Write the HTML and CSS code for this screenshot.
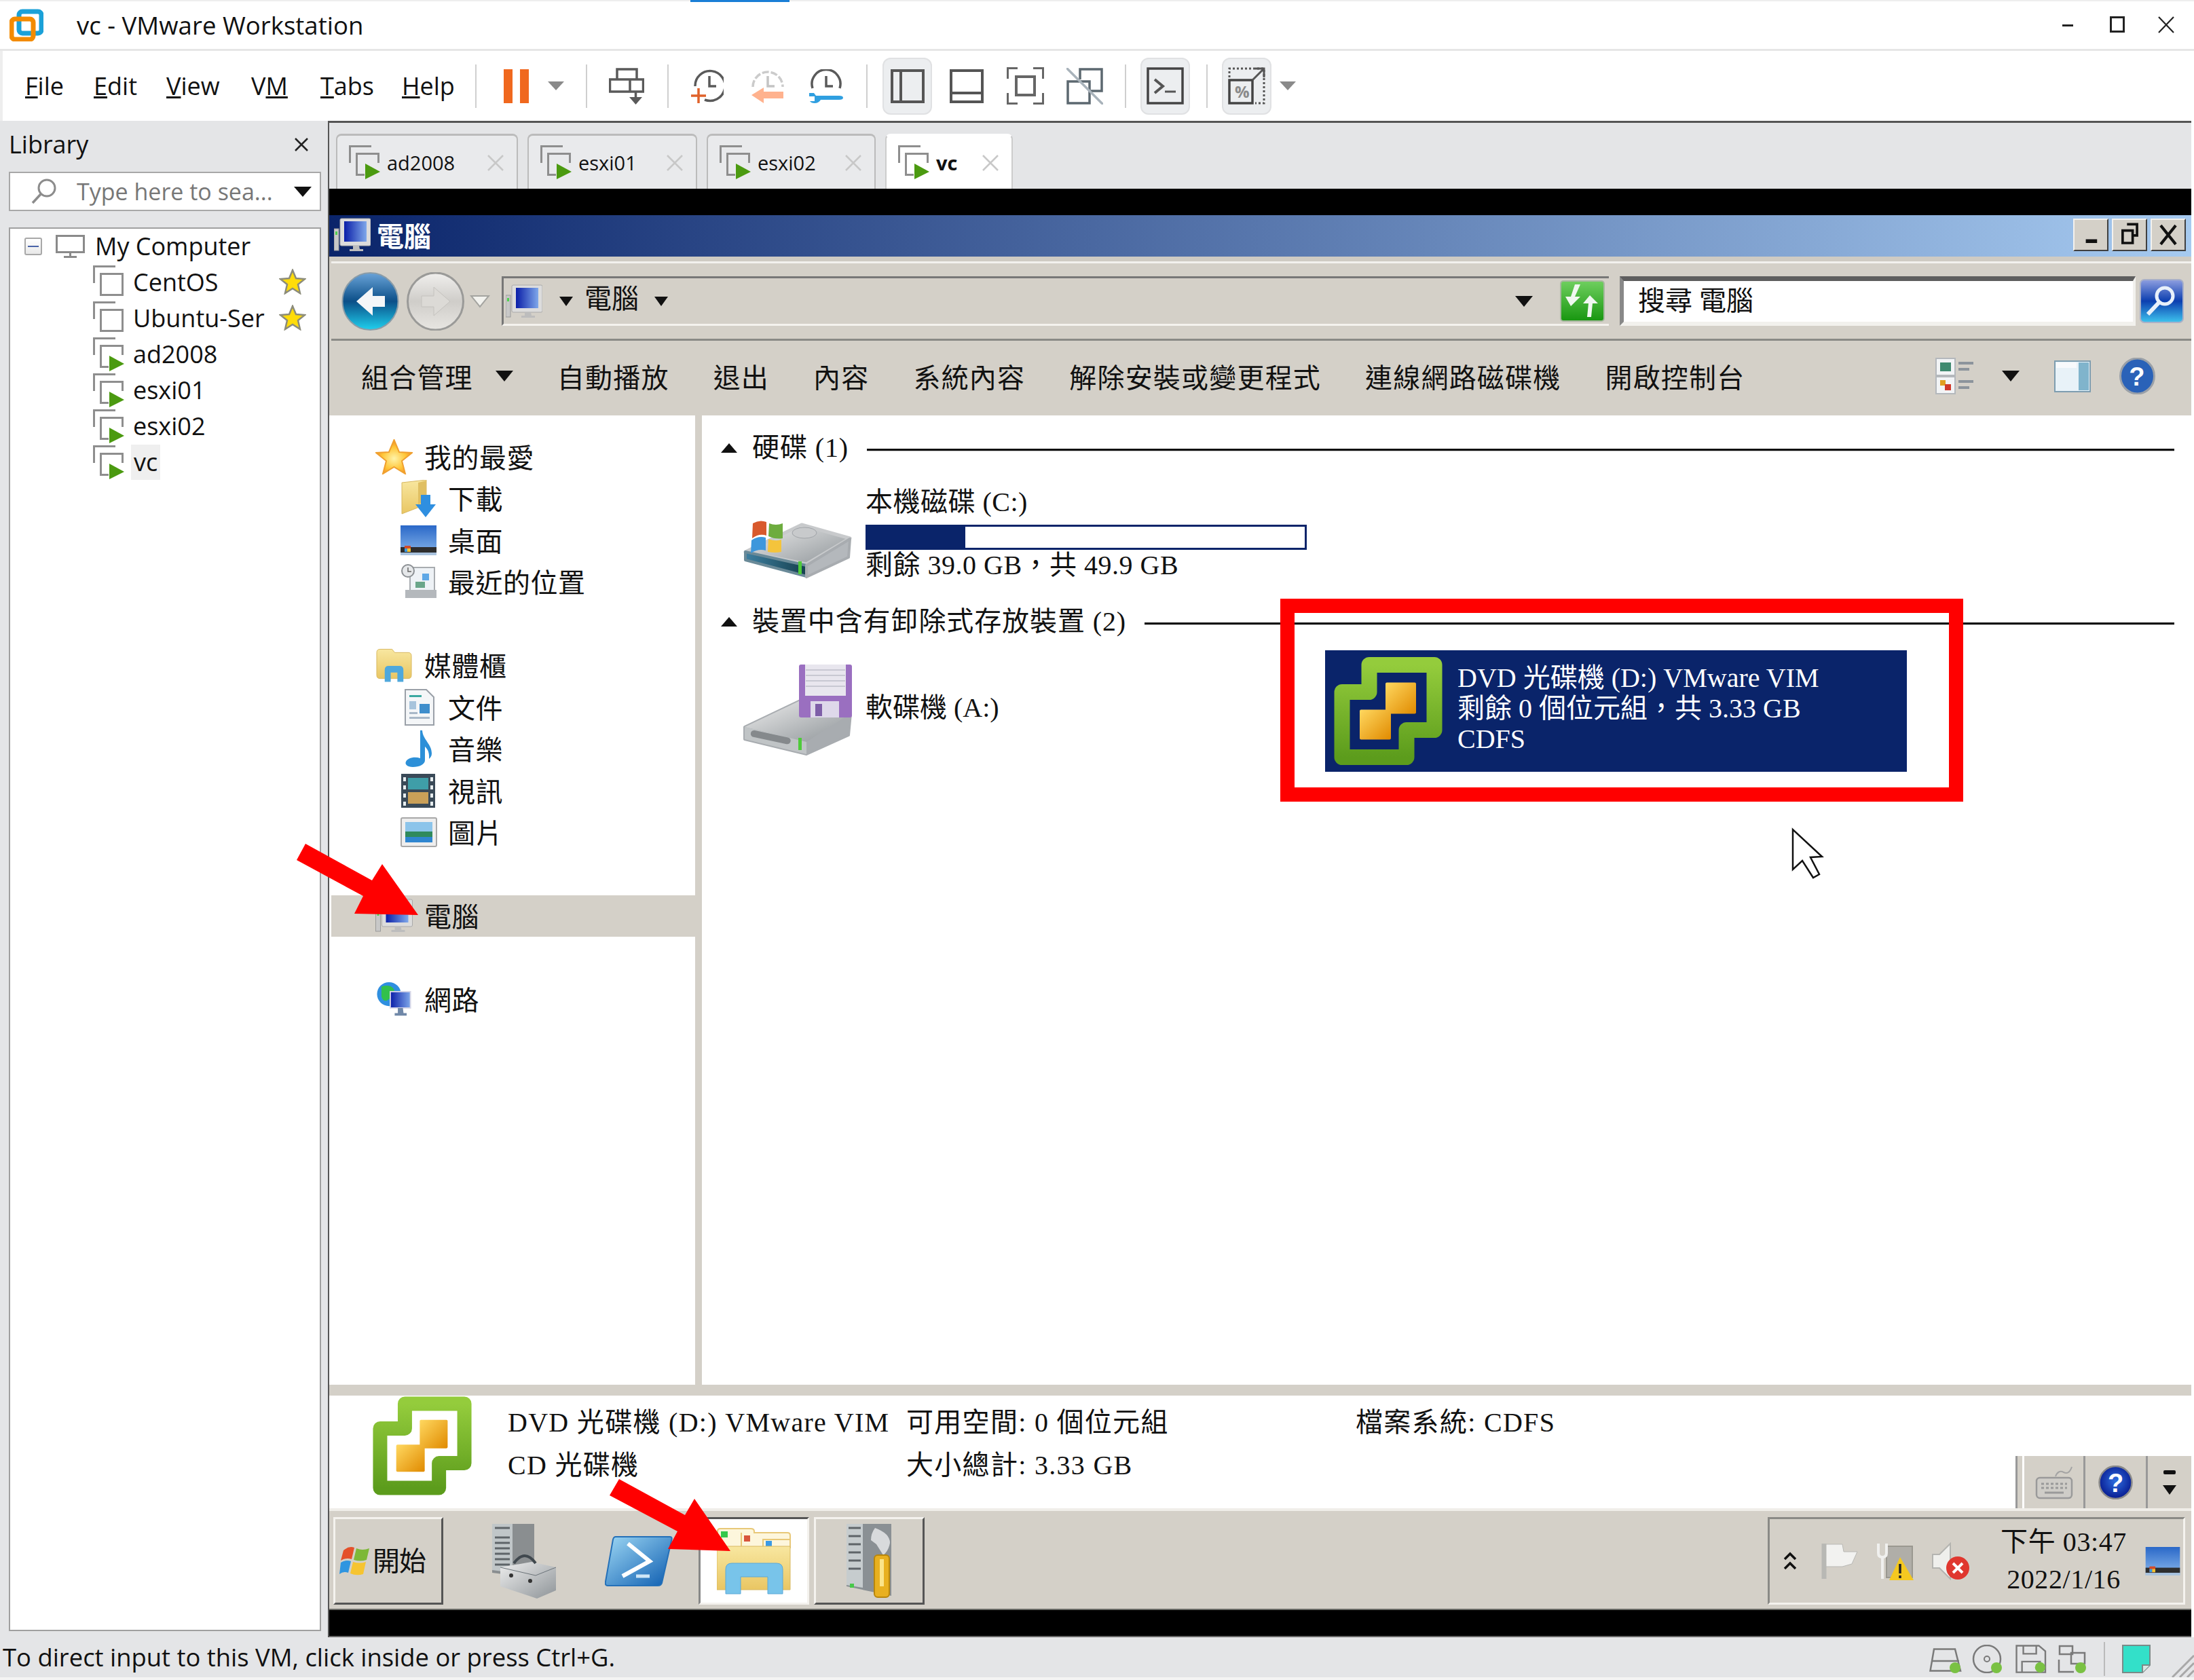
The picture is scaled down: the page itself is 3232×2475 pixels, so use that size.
FILE: index.html
```html
<!DOCTYPE html>
<html lang="zh-Hant">
<head>
<meta charset="utf-8">
<title>vc - VMware Workstation</title>
<link rel="stylesheet" href="styles.css">
</head>
<body>
<svg class="defs" aria-hidden="true">
  <defs>
    <linearGradient id="gGreen" x1="0" y1="0" x2="0" y2="1"><stop offset="0" stop-color="#94cc3c"/><stop offset="1" stop-color="#5c9c1c"/></linearGradient>
    <linearGradient id="gOrange" x1="0" y1="0" x2="1" y2="1"><stop offset="0" stop-color="#ffd860"/><stop offset="1" stop-color="#e08a00"/></linearGradient>
    <radialGradient id="gStar" cx=".5" cy=".55" r=".55"><stop offset="0" stop-color="#fff3a8"/><stop offset=".6" stop-color="#ffc638"/><stop offset="1" stop-color="#f08a20"/></radialGradient>
    <linearGradient id="gScreen" x1="0" y1="0" x2="1" y2="0"><stop offset="0" stop-color="#0a1ea8"/><stop offset="1" stop-color="#7fa8ea"/></linearGradient>
    <linearGradient id="gFolder" x1="0" y1="0" x2="0" y2="1"><stop offset="0" stop-color="#f8e7a0"/><stop offset="1" stop-color="#e9c663"/></linearGradient>
    <linearGradient id="gBack" x1="0" y1="0" x2="0" y2="1"><stop offset="0" stop-color="#6aa3d8"/><stop offset=".5" stop-color="#0b4f88"/><stop offset="1" stop-color="#1fd0ee"/></linearGradient>
    <linearGradient id="gFwd" x1="0" y1="0" x2="0" y2="1"><stop offset="0" stop-color="#f0efed"/><stop offset=".5" stop-color="#cfcdc9"/><stop offset="1" stop-color="#e8e6e2"/></linearGradient>
    <linearGradient id="gSteel" x1="0" y1="0" x2="1" y2="1"><stop offset="0" stop-color="#eeeeee"/><stop offset="1" stop-color="#8e9498"/></linearGradient>
    <linearGradient id="gTeal" x1="0" y1="0" x2="1" y2="0"><stop offset="0" stop-color="#3d7fa0"/><stop offset="1" stop-color="#16404e"/></linearGradient>
    <linearGradient id="gRefresh" x1="0" y1="0" x2="0" y2="1"><stop offset="0" stop-color="#6fcf5f"/><stop offset="1" stop-color="#17960f"/></linearGradient>
    <linearGradient id="gSearch" x1="0" y1="0" x2="0" y2="1"><stop offset="0" stop-color="#8f9fe0"/><stop offset=".5" stop-color="#0c3fb0"/><stop offset="1" stop-color="#3ec4ee"/></linearGradient>
    <radialGradient id="gHelp" cx=".5" cy=".45" r=".55"><stop offset="0" stop-color="#2f6fe0"/><stop offset="1" stop-color="#071a90"/></radialGradient>
    <linearGradient id="gPs" x1="0" y1="0" x2="1" y2="1"><stop offset="0" stop-color="#9ed8f4"/><stop offset="1" stop-color="#0c5cb0"/></linearGradient>
    <linearGradient id="gSky" x1="0" y1="0" x2="0" y2="1"><stop offset="0" stop-color="#2a68c8"/><stop offset="1" stop-color="#8ab8ec"/></linearGradient>

    <symbol id="vmlogo" viewBox="0 0 160 160">
      <path d="M52 12H148V108H107V148H12V52H52Z" fill="none" stroke="url(#gGreen)" stroke-width="23" stroke-linejoin="round"/>
      <rect x="76" y="38" width="45" height="46" fill="url(#gOrange)" rx="2"/>
      <rect x="38" y="78" width="46" height="44" fill="url(#gOrange)" rx="2"/>
    </symbol>
    <symbol id="vmoff" viewBox="0 0 46 50">
      <path d="M1.500 26V1.500H33" fill="none" stroke="#8e8e8e" stroke-width="3"/>
      <rect x="11.500" y="12.500" width="32" height="31" fill="none" stroke="#8e8e8e" stroke-width="3"/>
    </symbol>
    <symbol id="vmrun" viewBox="0 0 46 50">
      <path d="M1.500 26V1.500H33" fill="none" stroke="#8e8e8e" stroke-width="3"/>
      <path d="M23 43.500H11.500V12.500H43.500V26" fill="none" stroke="#8e8e8e" stroke-width="3"/>
      <path d="M24 27L46 39L24 50Z" fill="#4b9a10"/>
    </symbol>
    <symbol id="gstar" viewBox="0 0 40 38">
      <path d="M20 2L25 14L38 15L28 23L31 36L20 29L9 36L12 23L2 15L15 14Z" fill="#ffdc0a" stroke="#8c8c7a" stroke-width="2.500"/>
    </symbol>
    <symbol id="favstar" viewBox="0 0 55 52">
      <path d="M27.500 1L35 19L54 20L39 32L44 51L27.500 41L11 51L16 32L1 20L20 19Z" fill="url(#gStar)" stroke="#f0a030" stroke-width="2"/>
    </symbol>
    <symbol id="comp" viewBox="0 0 54 50">
      <rect x="0" y="16" width="7" height="32" fill="#c8c8c8" stroke="#9a9a9a"/>
      <rect x="2" y="20" width="3" height="5" fill="#4ed04e"/>
      <rect x="9" y="1" width="45" height="40" rx="2" fill="#dcdcdc" stroke="#aaa"/>
      <rect x="15" y="5" width="33" height="30" fill="url(#gScreen)"/>
      <path d="M28 41h9l1 5h5v3H23v-3h5z" fill="#bdbdbd"/>
    </symbol>
    <symbol id="dlfolder" viewBox="0 0 53 55">
      <path d="M2 4L38 0V36L2 50Z" fill="url(#gFolder)" stroke="#d8b860"/>
      <path d="M26 4L38 1V30L26 36Z" fill="#e0bf62"/>
      <path d="M30 22H44V36H52L37 55L22 36H30Z" fill="#2f8fe0"/>
    </symbol>
    <symbol id="desk" viewBox="0 0 53 44">
      <rect width="53" height="44" fill="url(#gSky)"/>
      <rect y="32" width="53" height="8" fill="#2e2e2e"/>
      <rect x="6" y="30" width="9" height="9" fill="#d24a2a"/><rect x="10" y="34" width="5" height="5" fill="#f2c230"/><rect x="6" y="34" width="4" height="5" fill="#3b9ae0"/>
      <rect y="40" width="53" height="4" fill="#a9c3de"/>
    </symbol>
    <symbol id="recent" viewBox="0 0 53 52">
      <rect x="14" y="5" width="36" height="34" fill="#eef2f6" stroke="#a8acb0" stroke-width="2"/>
      <circle cx="11" cy="10" r="9" fill="#e6e8ea" stroke="#8c9094" stroke-width="2"/><path d="M11 5v6h5" fill="none" stroke="#666" stroke-width="1.500"/>
      <rect x="32" y="14" width="10" height="10" fill="#5fa8e6"/><rect x="22" y="26" width="14" height="9" fill="#6aa68a"/>
      <path d="M7 38H53V50H7Z" fill="#b4b8bc"/>
    </symbol>
    <symbol id="libfolder" viewBox="0 0 56 50">
      <path d="M2 6q0-5 5-5h18l4 5h20q5 0 5 5v29q0 5-5 5H7q-5 0-5-5z" fill="url(#gFolder)" stroke="#d8b860"/>
      <path d="M14 50V32q0-6 6-6h16q6 0 6 6v18h-9V36H23v14z" fill="#4fa8dc"/>
    </symbol>
    <symbol id="docicon" viewBox="0 0 44 54">
      <path d="M1 1H32L43 12V53H1Z" fill="#f4f6f8" stroke="#9aa0a8" stroke-width="2"/>
      <rect x="7" y="9" width="18" height="3" fill="#3aa8a0"/><rect x="7" y="18" width="10" height="12" fill="#a8c4dc"/>
      <rect x="22" y="22" width="15" height="14" fill="#3e8ecc"/><rect x="7" y="34" width="12" height="3" fill="#a8b8c8"/><rect x="7" y="41" width="30" height="3" fill="#a8b8c8"/>
    </symbol>
    <symbol id="music" viewBox="0 0 44 54">
      <path d="M26 0C27 14 40 20 40 34C40 38 38 40 36 42C37 30 32 26 30 24V44C30 50 22 54 12 54C4 54 0 50 2 46C4 41 14 38 23 41V0Z" fill="#2d90d8"/>
    </symbol>
    <symbol id="video" viewBox="0 0 50 50">
      <rect width="50" height="50" fill="#3a4a58"/>
      <rect x="10" y="6" width="30" height="17" fill="#3f9ea8"/><rect x="10" y="27" width="30" height="17" fill="#caa058"/>
      <path d="M3 5h4v6H3zM3 17h4v6H3zM3 29h4v6H3zM3 41h4v6H3zM43 5h4v6h-4zM43 17h4v6h-4zM43 29h4v6h-4zM43 41h4v6h-4z" fill="#e8eef0"/>
    </symbol>
    <symbol id="picicon" viewBox="0 0 54 44">
      <rect x="1" y="1" width="52" height="42" rx="2" fill="#eeeeee" stroke="#a8a8a8" stroke-width="2"/>
      <rect x="7" y="7" width="40" height="14" fill="#8cc4ea"/><rect x="7" y="21" width="40" height="8" fill="#2f8a5c"/><rect x="7" y="29" width="40" height="8" fill="#2f86d0"/>
    </symbol>
    <symbol id="neticon" viewBox="0 0 56 56">
      <circle cx="20" cy="20" r="19" fill="#2f8fe0"/><path d="M8 8Q20 4 26 10T22 26T8 24Z" fill="#32c04c"/>
      <rect x="22" y="16" width="32" height="26" fill="url(#gScreen)" stroke="#d8d8e8" stroke-width="2"/>
      <path d="M34 42h8l1 8h5v4H29v-4h5z" fill="#7088a8"/>
    </symbol>
    <symbol id="hdd" viewBox="0 0 160 87">
      <path d="M3 48L86 8L157 28L93 66Z" fill="url(#gSteel)" stroke="#c8cacc" stroke-width="5" stroke-linejoin="round"/>
      <path d="M3 48L93 68V84L3 60Z" fill="url(#gTeal)" stroke="#6a8a98" stroke-width="4" stroke-linejoin="round"/>
      <path d="M93 68L157 29L155 56L93 85Z" fill="#b4b8bc" stroke="#a8acb0" stroke-width="4" stroke-linejoin="round"/>
      <ellipse cx="90" cy="20" rx="18" ry="8" fill="#c8cacc" stroke="#a0a4a8"/>
      <rect x="81" y="62" width="5" height="19" fill="#4ecb3a"/>
      <path d="M14 6Q24 0 34 4V24Q24 20 13 28Z" fill="#d8592c"/><path d="M38 6Q48 10 58 6V28Q48 30 37 25Z" fill="#6dac3e"/>
      <path d="M12 31Q22 24 33 27V46Q22 43 11 50Z" fill="#3d97dc"/><path d="M37 29Q47 33 56 30V48Q47 50 36 48Z" fill="#f4c43c"/>
    </symbol>
    <symbol id="floppy" viewBox="0 0 160 134">
      <path d="M2 92L86 52L158 72L155 104L93 132L2 110Z" fill="#a8acb0" stroke="#a8acb0" stroke-width="4" stroke-linejoin="round"/>
      <path d="M2 92L86 52L158 72L93 114Z" fill="url(#gSteel)"/>
      <path d="M2 92L93 114V132L2 110Z" fill="#c0c4c6"/>
      <rect x="12" y="96" width="60" height="10" rx="5" fill="#85898c" transform="rotate(12 12 96)"/>
      <rect x="81" y="108" width="5" height="18" fill="#4ecb3a"/>
      <rect x="82" y="0" width="78" height="78" rx="3" fill="#9a6fc0"/>
      <rect x="91" y="0" width="60" height="46" fill="#e8e6ee"/>
      <path d="M92 8h58M92 16h58M92 24h58M92 32h58" stroke="#c8c8d2" stroke-width="2"/>
      <rect x="99" y="54" width="42" height="24" fill="#ded8ea"/><rect x="106" y="58" width="10" height="18" fill="#7e5ea8"/>
    </symbol>
    <symbol id="winflag" viewBox="0 0 45 46">
      <path d="M6 7Q14 0 22 3L18 20Q10 17 2 22Z" fill="#e4502a"/><path d="M25 4Q34 8 44 4L40 21Q31 24 21 21Z" fill="#7db838"/>
      <path d="M2 25Q10 20 17 23L13 40Q6 37 0 42Z" fill="#2f95e0"/><path d="M20 24Q30 27 39 24L35 42Q25 45 16 41Z" fill="#f6c430"/>
    </symbol>
    <symbol id="srv" viewBox="0 0 96 110">
      <path d="M2 0H64V80L2 72Z" fill="#8a8e90"/>
      <path d="M2 0H32V72L2 68Z" fill="#c0c6c8"/>
      <path d="M6 6h22M6 20h22M6 28h22M6 36h22M6 44h22M6 52h22M6 60h22" stroke="#5e6468" stroke-width="3"/>
      <path d="M14 64L60 56L96 64V98L68 110L14 92Z" fill="url(#gSteel)"/>
      <path d="M34 58Q50 36 66 58" fill="none" stroke="#40484e" stroke-width="4"/>
      <path d="M14 64L66 76L96 64" fill="none" stroke="#6b7378"/>
      <circle cx="30" cy="76" r="3" fill="#333"/><circle cx="58" cy="84" r="3" fill="#333"/>
    </symbol>
    <symbol id="psicon" viewBox="0 0 100 76">
      <path d="M16 2H96Q100 2 98 8L84 70Q83 74 78 74H4Q0 74 1 68L12 6Q13 2 16 2Z" fill="url(#gPs)" stroke="#2470b8" stroke-width="2"/>
      <path d="M34 12L66 38L26 60" fill="none" stroke="#fff" stroke-width="6"/><path d="M46 60H66" stroke="#cfe6f6" stroke-width="5"/>
    </symbol>
    <symbol id="expfolder" viewBox="0 0 110 100">
      <path d="M1 30V6Q1 2 5 2H50Q55 2 55 6V8H104Q108 8 108 12V30Z" fill="#fdf6dc" stroke="#e8c878" stroke-width="2"/>
      <path d="M36 30V8M68 30V18H108" fill="none" stroke="#e8c878" stroke-width="2"/>
      <rect x="6" y="6" width="10" height="9" fill="#35c84c"/><rect x="40" y="12" width="9" height="9" fill="#d8553c"/><rect x="72" y="20" width="9" height="9" fill="#3a9ae6"/>
      <path d="M0 28H108V92H0Z" fill="url(#gFolder)" stroke="#d8b860"/>
      <path d="M13 98V62Q13 53 22 53H88Q97 53 97 62V98H75V73H35V98Z" fill="#78c4ea" stroke="#5aa8d8"/>
    </symbol>
    <symbol id="tool" viewBox="0 0 68 110">
      <path d="M0 0H66V106L0 92Z" fill="#8a9094"/>
      <path d="M0 0H24V94L0 90Z" fill="#c6ccce"/>
      <path d="M3 6h18M3 18h18M3 30h18M3 42h18M3 54h18M3 66h18" stroke="#5e6468" stroke-width="3"/>
      <rect x="5" y="88" width="6" height="6" fill="#47c84a"/>
      <path d="M42 6Q64 14 64 28Q62 40 54 46L44 30L36 24Q36 14 42 6Z" fill="#d8dadc"/>
      <rect x="41" y="46" width="22" height="62" rx="5" fill="#e8b020" stroke="#b8860c" stroke-width="2"/><rect x="49" y="52" width="6" height="40" fill="#fbe48a"/>
    </symbol>
  </defs>
</svg>

<div class="app">
  <header class="titlebar">
    <span class="topblue"></span>
    <svg class="applogo" viewBox="0 0 50 48"><rect x="14" y="4" width="33" height="32" rx="5" fill="none" stroke="#1ba1d8" stroke-width="7"/><rect x="3" y="15" width="32" height="30" rx="5" fill="none" stroke="#f38b00" stroke-width="7"/></svg>
    <span class="apptitle">vc - VMware Workstation</span>
    <svg class="winctrl" viewBox="0 0 190 30"><rect x="2" y="14" width="16" height="3" fill="#222"/><rect x="73.500" y="3.500" width="19" height="21" fill="none" stroke="#222" stroke-width="3"/><path d="M144 3L166 26M166 3L144 26" stroke="#222" stroke-width="2.200"/></svg>
  </header>

  <nav class="menubar">
    <div class="menu">
      <span><u>F</u>ile</span><span><u>E</u>dit</span><span><u>V</u>iew</span><span>V<u>M</u></span><span><u>T</u>abs</span><span><u>H</u>elp</span>
    </div>
    <i class="sep"></i>
    <svg class="tl ml40 t37" viewBox="0 0 37 50"><rect width="13" height="50" fill="#f0681e"/><rect x="24" width="13" height="50" fill="#f0681e"/></svg>
    <i class="drop ml28"></i>
    <i class="sep ml32"></i>
    <svg class="tl ml32 t52" viewBox="0 0 52 54"><path d="M12 17V2H41V17M1.500 17H50.500V35H1.500ZM31 17V35" fill="none" stroke="#5a5a5a" stroke-width="3.500"/><path d="M39.500 35V46" stroke="#5a5a5a" stroke-width="3.500"/><path d="M30 43H49L39.500 54Z" fill="#5a5a5a"/></svg>
    <i class="sep ml34"></i>
    <svg class="tl ml33 t48" viewBox="0 0 48 50"><path d="M4 24A22 22 0 1 1 18 44" transform="translate(2 1)" fill="none" stroke="#5a5a5a" stroke-width="3.500"/><path d="M27 10V25H37" fill="none" stroke="#5a5a5a" stroke-width="3.500"/><path d="M11 28V50M0 39H22" stroke="#e0622a" stroke-width="3.500"/></svg>
    <svg class="tl ml41 t48" viewBox="0 0 48 50"><path d="M2 26A22 22 0 1 1 46 26" fill="none" stroke="#cbcbcb" stroke-width="3.500" stroke-dasharray="10 3"/><path d="M24 10V25H34" fill="none" stroke="#c4c4c4" stroke-width="3.500"/><path d="M47 33V43H18V50L0 38L18 27V33Z" fill="#ffb28e"/></svg>
    <svg class="tl ml37 t50" viewBox="0 0 50 50"><path d="M5 28A21 21 0 1 1 45 28" fill="none" stroke="#5a5a5a" stroke-width="3.500"/><path d="M25 10V25H35" fill="none" stroke="#5a5a5a" stroke-width="3.500"/><path d="M0 35H7L10 39H44Q50 39 50 42Q50 45 44 45H17Q14 50 8 50Q3 50 1 47H8V40H0Z" fill="#2f9fe0"/></svg>
    <i class="sep ml34"></i>
    <span class="tbtn ml22"><svg class="t50" viewBox="0 0 50 50"><path d="M2 2H48V48H2ZM15 2V48" fill="none" stroke="#555" stroke-width="4"/></svg></span>
    <svg class="tl ml26 t50" viewBox="0 0 50 50"><path d="M2 2H48V48H2ZM2 35H48" fill="none" stroke="#555" stroke-width="4"/></svg>
    <svg class="tl ml34 t55" viewBox="0 0 55 55"><path d="M16 1.500H1.500V17M39 1.500H53.500V17M16 53.500H1.500V38M39 53.500H53.500V38" fill="none" stroke="#666" stroke-width="3"/><rect x="14" y="14" width="27" height="27" fill="none" stroke="#666" stroke-width="4"/></svg>
    <svg class="tl ml33 t54" viewBox="0 0 54 54"><path d="M20 17V2H52V34H36M2 20H34V52H2Z" fill="none" stroke="#5c6870" stroke-width="3.500"/><path d="M0 0L54 54" stroke="#a9b3bb" stroke-width="3.500"/></svg>
    <i class="sep ml32"></i>
    <span class="tbtn ml21"><svg class="t55" viewBox="0 0 55 55"><rect x="2" y="2" width="51" height="51" fill="none" stroke="#444" stroke-width="3.500"/><path d="M12 18L24 28L12 38" fill="none" stroke="#555" stroke-width="4"/><path d="M27 36H43" stroke="#555" stroke-width="3"/></svg></span>
    <i class="sep ml24"></i>
    <span class="tbtn ml21"><svg class="t55" viewBox="0 0 55 55"><rect x="2" y="19" width="34" height="34" fill="none" stroke="#444" stroke-width="3.500"/><path d="M2 15V2H53V53H40" fill="none" stroke="#555" stroke-width="3" stroke-dasharray="3 3"/><path d="M36 19L53 2M40 2H53V15" fill="none" stroke="#555" stroke-width="3"/><text class="pct" x="10" y="45">%</text></svg></span>
    <i class="drop ml12"></i>
  </nav>

  <div class="workspace">
    <aside class="library">
      <div class="libhead"><span>Library</span><svg class="libx" viewBox="0 0 22 20"><path d="M2 1L20 19M20 1L2 19" stroke="#222" stroke-width="2.500"/></svg></div>
      <div class="libsearch">
        <svg class="mag" viewBox="0 0 40 40"><circle cx="24" cy="15" r="12" fill="none" stroke="#8c8c8c" stroke-width="3"/><path d="M15 24L3 37" stroke="#8c8c8c" stroke-width="3.500"/></svg>
        <span class="ph">Type here to sea...</span><i class="blk"></i>
      </div>
      <div class="tree">
        <div class="treeroot">
          <span class="collapse"></span>
          <svg class="mon" viewBox="0 0 43 34"><rect x="1.500" y="1.500" width="40" height="24" fill="none" stroke="#8a8a8a" stroke-width="3"/><path d="M21.500 26V31M12 32.500H31" stroke="#8a8a8a" stroke-width="3"/></svg>
          <span>My Computer</span>
        </div>
        <div class="treerow"><svg class="vmi"><use href="#vmoff"/></svg><span>CentOS</span><svg class="fav"><use href="#gstar"/></svg></div>
        <div class="treerow"><svg class="vmi"><use href="#vmoff"/></svg><span>Ubuntu-Ser</span><svg class="fav"><use href="#gstar"/></svg></div>
        <div class="treerow"><svg class="vmi"><use href="#vmrun"/></svg><span>ad2008</span></div>
        <div class="treerow"><svg class="vmi"><use href="#vmrun"/></svg><span>esxi01</span></div>
        <div class="treerow"><svg class="vmi"><use href="#vmrun"/></svg><span>esxi02</span></div>
        <div class="treerow"><svg class="vmi"><use href="#vmrun"/></svg><span class="cur">vc</span></div>
      </div>
    </aside>

    <main class="main">
      <div class="tabbar">
        <div class="tab w268"><svg class="vmi"><use href="#vmrun"/></svg><span>ad2008</span><svg class="tabx" viewBox="0 0 26 26"><path d="M2 2L24 24M24 2L2 24" stroke="#c8c8c8" stroke-width="2.500"/></svg></div>
        <div class="tab w250"><svg class="vmi"><use href="#vmrun"/></svg><span>esxi01</span><svg class="tabx" viewBox="0 0 26 26"><path d="M2 2L24 24M24 2L2 24" stroke="#c8c8c8" stroke-width="2.500"/></svg></div>
        <div class="tab w249"><svg class="vmi"><use href="#vmrun"/></svg><span>esxi02</span><svg class="tabx" viewBox="0 0 26 26"><path d="M2 2L24 24M24 2L2 24" stroke="#c8c8c8" stroke-width="2.500"/></svg></div>
        <div class="tab w188 active"><svg class="vmi"><use href="#vmrun"/></svg><span>vc</span><svg class="tabx" viewBox="0 0 26 26"><path d="M2 2L24 24M24 2L2 24" stroke="#c8c8c8" stroke-width="2.500"/></svg></div>
      </div>
      <div class="blacktop"></div>

      <div class="guest">
        <div class="wintitle">
          <svg class="wticon"><use href="#comp"/></svg>
          <span>電腦</span>
          <div class="wtbtns">
            <span class="wbtn"><svg viewBox="0 0 52 46"><rect x="18" y="30" width="18" height="6" fill="#111"/></svg></span>
            <span class="wbtn"><svg viewBox="0 0 52 46"><path d="M22 6H38V24H32M15 16H31V36H15Z" fill="none" stroke="#111" stroke-width="4"/></svg></span>
            <span class="wbtn"><svg viewBox="0 0 52 46"><path d="M14 8L38 38M38 8L14 38" stroke="#111" stroke-width="4.500"/></svg></span>
          </div>
        </div>

        <div class="addrbar">
          <svg class="orb" viewBox="0 0 85 86"><ellipse cx="42.500" cy="43" rx="41" ry="42" fill="url(#gBack)" stroke="#8a9ca8" stroke-width="2"/><path d="M46 22L22 43L46 64V51H64V35H46Z" fill="#f4f6f8"/></svg>
          <svg class="orb ml11" viewBox="0 0 85 86"><ellipse cx="42.500" cy="43" rx="41" ry="42" fill="url(#gFwd)" stroke="#9a9a98" stroke-width="3"/><path d="M40 22L64 43L40 64V51H22V35H40Z" fill="#dcdad6" stroke="#c4c2be"/></svg>
          <svg class="histdrop ml8" viewBox="0 0 30 20"><path d="M2 2H28L15 18Z" fill="#f2f2ee" stroke="#a4a4a0" stroke-width="2"/></svg>
          <div class="addr ml17">
            <svg class="adicon"><use href="#comp"/></svg>
            <i class="tri sm ml25"></i><span class="ml17">電腦</span><i class="tri sm ml23"></i>
            <i class="tri ml-auto"></i>
            <svg class="refresh" viewBox="0 0 66 61"><rect x="1" y="1" width="64" height="59" rx="4" fill="url(#gRefresh)" stroke="#a8b8a0" stroke-width="2"/><path d="M30 6L22 24H30L16 38L8 24H16L22 6ZM44 22L56 34H48L46 54H40L42 34H34Z" fill="#f0f8f0"/></svg>
          </div>
          <div class="search"><span>搜尋 電腦</span></div>
          <svg class="searchbtn" viewBox="0 0 65 65"><rect x="1" y="1" width="63" height="63" rx="6" fill="url(#gSearch)" stroke="#a8b0c8" stroke-width="2"/><circle cx="37" cy="25" r="12" fill="none" stroke="#e8f0fa" stroke-width="5"/><path d="M29 34L12 52" stroke="#e8f0fa" stroke-width="6"/></svg>
        </div>

        <div class="cmdbar">
          <span>組合管理</span><i class="tri mnl34"></i>
          <span>自動播放</span><span>退出</span><span>內容</span><span>系統內容</span><span>解除安裝或變更程式</span><span>連線網路磁碟機</span><span>開啟控制台</span>
          <div class="cmdright">
            <svg class="viewic" viewBox="0 0 58 54"><rect x="1" y="1" width="28" height="25" fill="#f2f4f6" stroke="#b4b8bc" stroke-width="2"/><rect x="7" y="7" width="16" height="13" fill="#3f8a70"/><rect x="1" y="28" width="28" height="25" fill="#f2f4f6" stroke="#b4b8bc" stroke-width="2"/><rect x="7" y="33" width="8" height="8" fill="#e0a020"/><rect x="14" y="39" width="9" height="9" fill="#d03a2a"/><path d="M34 8H56M34 17H50M34 35H56M34 44H50" stroke="#8c949c" stroke-width="4"/></svg>
            <i class="tri ml40"></i>
            <svg class="paneic ml51" viewBox="0 0 54 47"><rect x="1" y="1" width="52" height="45" fill="#e8f2f8" stroke="#7d9db0" stroke-width="2"/><rect x="3" y="3" width="30" height="8" fill="#f8fafc"/><rect x="36" y="3" width="15" height="41" fill="#80b4cc"/></svg>
            <svg class="helpic ml42" viewBox="0 0 53 54"><ellipse cx="26.500" cy="27" rx="25" ry="26" fill="#2a62b8" stroke="#9aa0a8" stroke-width="3"/><text class="q" x="26.500" y="41">?</text></svg>
          </div>
        </div>

        <div class="panes">
          <div class="nav">
            <div class="nr l1"><svg class="ni s55"><use href="#favstar"/></svg><span>我的最愛</span></div>
            <div class="nr l2"><svg class="ni d53"><use href="#dlfolder"/></svg><span>下載</span></div>
            <div class="nr l2"><svg class="ni d44"><use href="#desk"/></svg><span>桌面</span></div>
            <div class="nr l2"><svg class="ni d52"><use href="#recent"/></svg><span>最近的位置</span></div>
            <div class="nr"></div>
            <div class="nr l1"><svg class="ni s50"><use href="#libfolder"/></svg><span>媒體櫃</span></div>
            <div class="nr l2"><svg class="ni doc"><use href="#docicon"/></svg><span>文件</span></div>
            <div class="nr l2"><svg class="ni doc"><use href="#music"/></svg><span>音樂</span></div>
            <div class="nr l2"><svg class="ni vid"><use href="#video"/></svg><span>視訊</span></div>
            <div class="nr l2"><svg class="ni pic"><use href="#picicon"/></svg><span>圖片</span></div>
            <div class="nr"></div>
            <div class="nr l1 sel"><svg class="ni s50"><use href="#comp"/></svg><span>電腦</span></div>
            <div class="nr"></div>
            <div class="nr l1"><svg class="ni s55"><use href="#neticon"/></svg><span>網路</span></div>
          </div>
          <div class="splitter"></div>
          <div class="content">
            <div class="grouph"><i class="tri up"></i><span>硬碟 (1)</span><b></b></div>
            <div class="hddtile">
              <svg class="hddic"><use href="#hdd"/></svg>
              <div class="hddinfo">
                <div class="tl50">本機磁碟 (C:)</div>
                <div class="bar"><div class="barfill"></div></div>
                <div class="tl46">剩餘 39.0 GB，共 49.9 GB</div>
              </div>
            </div>
            <div class="grouph g2"><i class="tri up"></i><span>裝置中含有卸除式存放裝置 (2)</span><b></b></div>
            <div class="devrow">
              <div class="floppytile"><svg class="flopic"><use href="#floppy"/></svg><span>軟碟機 (A:)</span></div>
              <div class="dvdtile">
                <svg class="dvdic"><use href="#vmlogo"/></svg>
                <div class="dvdtext"><div>DVD 光碟機 (D:) VMware VIM</div><div>剩餘 0 個位元組，共 3.33 GB</div><div>CDFS</div></div>
              </div>
            </div>
          </div>
        </div>

        <div class="strip"></div>

        <div class="details">
          <svg class="detic"><use href="#vmlogo"/></svg>
          <span>DVD 光碟機 (D:) VMware VIM</span><span>可用空間: 0 個位元組</span><span>檔案系統: CDFS</span>
          <span>CD 光碟機</span><span>大小總計: 3.33 GB</span>
          <div class="langbar">
            <span class="lb k"><svg viewBox="0 0 56 50"><path d="M30 16Q34 6 42 10T54 2" fill="none" stroke="#a4a4a4" stroke-width="2"/><rect x="2" y="18" width="52" height="30" rx="5" fill="#cfcdc8" stroke="#9a9a9a" stroke-width="2.500"/><path d="M9 27H47M9 33H47" stroke="#9a9a9a" stroke-width="3" stroke-dasharray="4 3"/><path d="M14 40H42" stroke="#9a9a9a" stroke-width="3"/></svg></span>
            <span class="lb h"><svg viewBox="0 0 51 50"><ellipse cx="25.500" cy="25" rx="24" ry="24" fill="url(#gHelp)" stroke="#8a8a8a" stroke-width="2.500"/><text class="q" x="25.500" y="39">?</text></svg></span>
            <span class="lb m"><i class="dash"></i><i class="tri sm"></i></span>
          </div>
        </div>

        <div class="taskbar">
          <div class="startbtn"><svg class="wf"><use href="#winflag"/></svg><span>開始</span></div>
          <div class="tasks">
            <div class="task"><svg class="ts"><use href="#srv"/></svg></div>
            <div class="task"><svg class="tp"><use href="#psicon"/></svg></div>
            <div class="task on"><svg class="te"><use href="#expfolder"/></svg></div>
            <div class="task raised"><svg class="tt"><use href="#tool"/></svg></div>
          </div>
          <div class="tray">
            <svg class="chev" viewBox="0 0 20 30"><path d="M2 12L10 4L18 12M2 26L10 18L18 26" fill="none" stroke="#111" stroke-width="3.500"/></svg>
            <svg class="ti ml35" viewBox="0 0 56 56"><path d="M5 2V54" stroke="#b8b8b4" stroke-width="7"/><path d="M8 3H32L34 14H54L46 32L32 36H8Z" fill="#f2f2f0" stroke="#b8b8b4"/></svg>
            <svg class="ti ml25" viewBox="0 0 56 56"><rect x="16" y="6" width="38" height="46" fill="#b0aea8" stroke="#9a9890" stroke-width="2"/><path d="M4 2V16Q4 22 10 22Q16 22 16 16V2M10 22V54" fill="none" stroke="#f0f0ee" stroke-width="4"/><path d="M36 22L56 56H20Z" fill="#f4c820"/><path d="M36 32V46M36 49V53" stroke="#222" stroke-width="3.500"/></svg>
            <svg class="ti ml26" viewBox="0 0 56 56"><path d="M2 18H12L28 2V54L12 38H2Z" fill="#efefec" stroke="#b4b4b0" stroke-width="2"/><circle cx="39" cy="38" r="17" fill="#e0372e"/><path d="M32 31L46 45M46 31L32 45" stroke="#fff" stroke-width="4"/></svg>
            <div class="clock"><div>下午 03:47</div><div>2022/1/16</div></div>
            <svg class="tdesk"><use href="#desk"/></svg>
          </div>
        </div>
      </div>
      <div class="blackbot"></div>
    </main>
  </div>

  <footer class="statusbar">
    <span>To direct input to this VM, click inside or press Ctrl+G.</span>
    <div class="sticons">
      <svg class="st" viewBox="0 0 48 42"><path d="M1.500 38.500L7 6.500H38L46 38.500ZM3 24H44" fill="none" stroke="#7a7a7a" stroke-width="2.500"/><circle cx="38" cy="34" r="8" fill="#7ac143"/></svg>
      <svg class="st ml15" viewBox="0 0 48 42"><circle cx="22" cy="21" r="20" fill="none" stroke="#7a7a7a" stroke-width="2.500"/><circle cx="22" cy="21" r="4" fill="none" stroke="#7a7a7a" stroke-width="2"/><circle cx="36" cy="34" r="8" fill="#7ac143"/></svg>
      <svg class="st ml15" viewBox="0 0 48 44"><path d="M1.500 1.500H36L46 10V42.500H1.500ZM12 1.500V14H32V1.500M10 42V26H38V42" fill="none" stroke="#7a7a7a" stroke-width="2.500"/><circle cx="38" cy="35" r="8" fill="#7ac143"/></svg>
      <svg class="st ml15" viewBox="0 0 48 42"><path d="M3 2H22V14H3ZM20 12H40V28H20ZM2 22V40H24" fill="none" stroke="#7a7a7a" stroke-width="2.500"/><circle cx="34" cy="34" r="8" fill="#7ac143"/></svg>
      <i class="stsep"></i>
      <svg class="note" viewBox="0 0 42 42"><path d="M1 1H41V30L30 41H1Z" fill="#33e0c9" stroke="#7a8a88" stroke-width="2"/><path d="M30 41V30H41" fill="#d8e8e4" stroke="#7a8a88" stroke-width="2"/></svg>
      <svg class="grip" viewBox="0 0 33 33"><path d="M1 33L33 1M12 33L33 12M23 33L33 23" stroke="#a8a8a8" stroke-width="3"/></svg>
    </div>
  </footer>
</div>

<svg class="overlay" viewBox="0 0 3232 2475" aria-hidden="true">
  <rect x="1896.500" y="892.500" width="985" height="278" fill="none" stroke="#ff0000" stroke-width="21"/>
  <polygon points="450,1243 548,1297 563,1273 616,1348 522,1346 535,1320 437,1267" fill="#ff0000"/>
  <polygon points="912,2179 1009,2232 1023,2208 1076,2285 984,2282 998,2256 898,2203" fill="#ff0000"/>
  <path d="M2641 1222V1281L2655 1268L2671 1293L2680 1288L2667 1263L2684 1262Z" fill="#fff" stroke="#111" stroke-width="2.500"/>
</svg>
</body>
</html>
```

FILE: styles.css
```css
* { box-sizing: border-box; }
html, body { margin: 0; padding: 0; background: #fff; }
body { width: 3232px; height: 2475px; overflow: hidden; position: relative; font-family: "Open Sans", "Noto Sans", sans-serif; color: #111; }
.defs { position: absolute; width: 0; height: 0; }
.overlay { position: absolute; top: 0; left: 0; width: 3232px; height: 2475px; pointer-events: none; }
i { display: block; font-style: normal; flex: none; }
svg { display: block; flex: none; }

.app { display: flex; flex-direction: column; width: 3232px; height: 2475px; }

/* window chrome */
.titlebar { height: 75px; flex: none; display: flex; align-items: center; position: relative; border-top: 2px solid #eee; border-bottom: 3px solid #e6e6e6; padding-left: 14px; }
.topblue { position: absolute; left: 1017px; top: -2px; width: 146px; height: 3px; background: #1a7fd6; }
.applogo { width: 50px; height: 48px; }
.apptitle { margin-left: 49px; font-size: 36.6px; line-height: 1; }
.winctrl { width: 190px; height: 30px; margin-left: auto; margin-right: 6px; }

.menubar { height: 103px; flex: none; display: flex; align-items: center; border-left: 4px solid #eee; background: #fff; }
.menu { display: grid; grid-template-columns: 101px 107px 125px 102px 120px 108px; padding-left: 33px; width: 696px; font-size: 36px; line-height: 1; }
.sep { width: 2px; height: 64px; background: #cfcfcf; }
.drop { width: 0; height: 0; border-left: 12px solid transparent; border-right: 12px solid transparent; border-top: 13px solid #8a8a8a; }
.tl { flex: none; }
.t37 { width: 37px; height: 50px; }
.t48 { width: 48px; height: 50px; }
.t50 { width: 50px; height: 50px; }
.t52 { width: 52px; height: 54px; }
.t54 { width: 54px; height: 54px; }
.t55 { width: 55px; height: 55px; }
.tbtn { width: 73px; height: 84px; flex: none; display: flex; align-items: center; justify-content: center; background: #eceef0; border: 2px solid #e0e1e3; border-radius: 12px; }
.pct { font: 700 24px "Open Sans", sans-serif; fill: #8a8a8a; }

.ml8 { margin-left: 8px; } .ml11 { margin-left: 11px; } .ml12 { margin-left: 12px; } .ml15 { margin-left: 15px; } .ml17 { margin-left: 17px; }
.ml21 { margin-left: 21px; } .ml22 { margin-left: 22px; } .ml23 { margin-left: 23px; } .ml24 { margin-left: 24px; } .ml25 { margin-left: 25px; } .ml26 { margin-left: 26px; }
.ml28 { margin-left: 28px; } .ml30 { margin-left: 30px; } .ml32 { margin-left: 32px; } .ml33 { margin-left: 33px; } .ml34 { margin-left: 34px; } .ml35 { margin-left: 35px; }
.ml37 { margin-left: 37px; } .ml40 { margin-left: 40px; } .ml41 { margin-left: 41px; } .ml42 { margin-left: 42px; } .ml51 { margin-left: 51px; } .ml-auto { margin-left: auto; }

.workspace { flex: none; height: 2234px; display: flex; }

/* library */
.library { width: 483px; flex: none; background: #e4e5e7; padding: 0 10px 9px 13px; display: flex; flex-direction: column; }
.libhead { height: 75px; flex: none; display: flex; align-items: center; justify-content: space-between; padding: 0 18px 6px 0; font-size: 36px; line-height: 1; }
.libx { width: 22px; height: 20px; }
.libsearch { height: 58px; flex: none; background: #fff; border: 2px solid #a8a8a8; display: flex; align-items: center; padding-left: 30px; }
.mag { width: 40px; height: 40px; }
.ph { margin-left: 28px; font-size: 34px; color: #777; line-height: 1; white-space: nowrap; }
.blk { margin-left: auto; margin-right: 12px; width: 0; height: 0; border-left: 13px solid transparent; border-right: 13px solid transparent; border-top: 15px solid #111; }
.tree { flex: 1; margin-top: 24px; background: #fff; border: 2px solid #a0a0a0; font-size: 36px; line-height: 1; }
.treeroot { height: 52px; display: flex; align-items: center; padding-left: 21px; }
.collapse { width: 26px; height: 26px; border: 2px solid #a8a8a8; border-radius: 3px; background: linear-gradient(#fff, #e8e8e8); position: relative; flex: none; }
.collapse::after { content: ""; position: absolute; left: 3px; right: 3px; top: 10px; height: 2px; background: #4a64a8; }
.mon { width: 43px; height: 34px; margin-left: 20px; }
.treeroot span:last-child { margin-left: 15px; }
.treerow { height: 53px; display: flex; align-items: center; padding-left: 122px; position: relative; }
.vmi { width: 46px; height: 50px; }
.treerow span { margin-left: 13px; white-space: nowrap; }
.treerow .cur { background: #efefef; margin-left: 10px; padding: 8px 4px; }
.fav { width: 40px; height: 38px; position: absolute; left: 396px; top: 7px; }

/* main */
.main { width: 2745px; flex: none; border-left: 2px solid #555; display: flex; flex-direction: column; background: #000; }
.tabbar { height: 100px; flex: none; background: #e4e5e7; border-top: 3px solid #555; display: flex; align-items: flex-end; gap: 14px; padding-left: 10px; }
.tab { height: 81px; flex: none; display: flex; align-items: center; padding-left: 17px; border: 2px solid #bbb; border-bottom: 0; border-radius: 8px 8px 0 0; border-top-width: 3px; background: #e9eaec; font-size: 29px; line-height: 1; position: relative; }
.tab span { margin-left: 10px; }
.tab .tabx { position: absolute; right: 18px; top: 27px; width: 26px; height: 26px; }
.tab.active { background: #fff; border-color: #fff #ccc transparent #ccc; font-weight: 700; }
.w268 { width: 268px; } .w250 { width: 250px; } .w249 { width: 249px; } .w188 { width: 188px; }
.blacktop { height: 39px; flex: none; background: #000; }
.blackbot { flex: 1; background: #000; border-bottom: 2px solid #666; }

/* guest */
.guest { height: 2055px; flex: none; width: 2743px; background: #d4d0c8; display: flex; flex-direction: column; font-family: "Liberation Serif", "Noto Sans CJK TC", serif; font-size: 40px; line-height: 1; }
.wintitle { height: 68px; flex: none; background: linear-gradient(90deg, #0a246a, #a6caf0) border-box; display: flex; align-items: center; padding: 0 8px 3px 7px; color: #fff; font-weight: 700; border-bottom: 7px solid #cfcbc3; }
.wticon { width: 54px; height: 50px; }
.wintitle span { margin-left: 9px; font-family: "Noto Sans CJK TC", sans-serif; }
.wtbtns { margin-left: auto; display: flex; gap: 5px; }
.wtbtns .wbtn { margin: 0; width: 52px; height: 48px; background: #d4d0c8; border: 2px solid; border-color: #f4f2ee #404040 #404040 #f4f2ee; display: block; }
.wbtn svg { width: 48px; height: 44px; }

.addrbar { height: 117px; flex: none; display: flex; align-items: center; padding: 0 11px 0 15px; border-top: 3px solid #f2f1ed; border-bottom: 3px solid #8a8a86; margin-left: 3px; }
.orb { width: 85px; height: 86px; }
.histdrop { width: 30px; height: 20px; }
.addr { flex: 1; height: 73px; display: flex; align-items: center; border: solid; border-width: 3px 0 3px 3px; border-color: #777 transparent #f4f2ee #777; padding-left: 3px; }
.addr > span { margin-top: -6px; }
.adicon { width: 54px; height: 50px; }
.tri { width: 0; height: 0; border-left: 13px solid transparent; border-right: 13px solid transparent; border-top: 16px solid #111; }
.tri.sm { border-left-width: 10px; border-right-width: 10px; border-top-width: 14px; }
.tri.up { border-top: 0; border-bottom: 14px solid #111; border-left-width: 12px; border-right-width: 12px; }
.mnl34 { margin-left: -32px; }
.refresh { width: 66px; height: 61px; margin-left: 40px; margin-right: 6px; }
.search { width: 760px; height: 73px; flex: none; margin-left: 16px; background: #fff; border: solid; border-width: 7px 4px 6px 6px; border-color: #5e5e5e #f2f1ed #f2f1ed #888; display: flex; align-items: center; padding-left: 21px; }
.searchbtn { width: 65px; height: 65px; margin-left: 6px; }

.cmdbar { height: 110px; flex: none; display: flex; align-items: center; gap: 65px; padding: 0 53px 6px 47px; letter-spacing: 1.2px; font-family: "Noto Sans CJK TC", sans-serif; }
.cmdright { margin-left: auto; display: flex; align-items: center; }
.viewic { width: 58px; height: 54px; }
.paneic { width: 54px; height: 47px; }
.helpic { width: 53px; height: 54px; }
.q { font: 700 38px "Liberation Sans", sans-serif; fill: #fff; text-anchor: middle; }

.panes { height: 1428px; flex: none; display: flex; background: #fff; }
.nav { width: 539px; flex: none; padding-top: 30px; font-family: "Noto Sans CJK TC", sans-serif; }
.nr { height: 61.5px; display: flex; align-items: center; }
.nr > span { letter-spacing: .5px; margin-top: -2px; }
.nr.l1 { padding-left: 68px; }
.nr.l1 .ni { width: 55px; margin-right: 17px; }
.nr.l2 { padding-left: 105px; }
.nr.l2 .ni { margin-right: 17px; }
.nr.sel { background: #d4d0c8; margin-left: 3px; padding-left: 65px; }
.s55 { height: 52px; } .s50 { height: 50px; }
.d53 { width: 53px; height: 55px; } .d44 { width: 53px; height: 44px; } .d52 { width: 53px; height: 52px; }
.nr.l2 .doc { width: 44px; height: 54px; margin-left: 6px; margin-right: 20px; }
.nr.l2 .vid { width: 50px; height: 50px; margin-left: 1px; margin-right: 19px; }
.nr.l2 .pic { width: 54px; height: 44px; margin-right: 16px; }
.splitter { width: 10px; flex: none; background: #d4d0c8; }
.content { flex: 1; padding-top: 18px; }
.grouph { height: 60px; display: flex; align-items: center; padding-left: 28px; padding-right: 25px; }
.grouph span { margin-left: 22px; white-space: nowrap; letter-spacing: .9px; }
.grouph b { flex: 1; height: 4px; margin-left: 27px; margin-top: 6px; background: #111; border-bottom: 1px solid #ccc; }
.grouph.g2 { margin-top: 30px; }
.hddtile { display: flex; padding-left: 61px; margin-top: 25px; }
.hddic { width: 160px; height: 87px; margin-top: 50px; }
.hddinfo { margin-left: 20px; }
.tl50 { height: 50px; display: flex; align-items: center; letter-spacing: .5px; }
.tl46 { height: 46px; display: flex; align-items: center; white-space: pre; letter-spacing: .5px; }
.bar { width: 650px; height: 37px; margin-top: 8px; border: 3px solid #0a246a; background: #fff; }
.barfill { width: 144px; height: 100%; background: #0a246a; }
.devrow { display: flex; align-items: flex-start; padding-left: 61px; margin-top: 12px; }
.floppytile { width: 857px; flex: none; display: flex; align-items: center; margin-top: 21px; }
.flopic { width: 160px; height: 134px; }
.floppytile span { margin-left: 20px; margin-top: -6px; }
.dvdtile { width: 857px; height: 179px; flex: none; background: #0a246a; color: #fff; display: flex; align-items: center; padding-left: 13px; }
.dvdic { width: 160px; height: 165px; }
.dvdtext { margin-left: 22px; margin-top: -8px; }
.dvdtext div { height: 45px; display: flex; align-items: center; white-space: pre; }

.strip { height: 16px; flex: none; }
.details { height: 166px; flex: none; background: #fff; position: relative; display: grid; grid-template-columns: 263px 587px 662px 1fr; grid-template-rows: 63px 63px; padding-top: 8px; align-items: center; }
.detic { width: 150px; height: 146px; grid-row: 1 / span 2; margin: -7px 0 0 62px; align-self: start; }
.details > span { white-space: nowrap; letter-spacing: 1.3px; }
.langbar { position: absolute; right: 0; bottom: 0; width: 259px; height: 77px; background: #d4d0c8; display: flex; align-items: center; border-left: 3px solid #999; padding-left: 7px; }
.lb { height: 77px; display: flex; flex-direction: column; align-items: center; justify-content: center; flex: none; border-left: 3px solid #fff; border-right: 2px solid #999; }
.lb.k { width: 90px; border-left-color: #fff; border-right: 0; }
.lb.k svg { width: 56px; height: 50px; }
.lb.h { width: 95px; border-left: 3px solid #999; border-right: 3px solid #999; }
.lb.h svg { width: 51px; height: 50px; }
.lb.m { flex: 1; border: 0; gap: 16px; }
.dash { width: 18px; height: 6px; background: #111; border-radius: 2px; }

.taskbar { height: 150px; flex: none; display: flex; align-items: flex-start; padding: 9px 9px 0 6px; border-top: 4px solid #f0eee9; border-bottom: 2px solid #6a6a66; }
.startbtn { width: 162px; height: 129px; flex: none; border: 3px solid; border-color: #f4f2ee #555 #555 #f4f2ee; display: flex; align-items: center; padding-left: 6px; font-family: "Noto Sans CJK TC", sans-serif; letter-spacing: -1px; }
.wf { width: 45px; height: 46px; }
.startbtn span { margin-left: 4px; margin-top: -6px; }
.tasks { display: flex; gap: 7px; margin-left: 36px; }
.task { width: 163px; height: 129px; display: flex; align-items: center; justify-content: center; }
.task.on { background: #fff; border: 3px solid; border-color: #555 #f4f2ee #f4f2ee #888; }
.task.raised { border: 3px solid; border-color: #f4f2ee #555 #555 #f4f2ee; }
.ts { width: 96px; height: 110px; }
.tp { width: 100px; height: 76px; }
.te { width: 110px; height: 100px; }
.tt { width: 68px; height: 110px; }
.tray { margin-left: auto; width: 615px; height: 129px; flex: none; display: flex; align-items: center; padding-left: 20px; border: 3px solid; border-color: #8a8a86 #f4f2ee #f4f2ee #8a8a86; }
.chev { width: 20px; height: 30px; }
.ti { width: 56px; height: 56px; }
.clock { width: 190px; margin-left: 44px; text-align: center; letter-spacing: .6px; }
.clock div { height: 55px; display: flex; align-items: center; justify-content: center; white-space: pre; }
.tdesk { width: 52px; height: 42px; margin-left: 25px; }

/* status bar */
.statusbar { flex: 1; background: #e4e5e7; display: flex; align-items: center; padding-left: 4px; font-size: 36.4px; line-height: 1; border-bottom: 4px solid #f4f4f4; }
.statusbar > span { white-space: nowrap; }
.sticons { margin-left: auto; display: flex; align-items: center; align-self: stretch; padding-top: 4px; }
.st { width: 48px; height: 42px; }
.stsep { width: 2px; height: 50px; background: #bbb; margin-left: 20px; margin-right: 25px; }
.note { width: 42px; height: 42px; }
.grip { width: 33px; height: 33px; margin-left: 31px; margin-top: 22px; }
```
